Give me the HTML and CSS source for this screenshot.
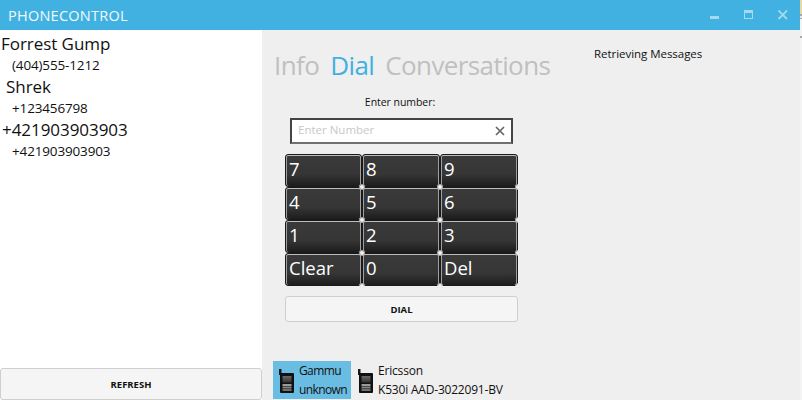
FILE: index.html
```html
<!DOCTYPE html>
<html lang="en">
<head>
<meta charset="utf-8">
<title>PhoneControl</title>
<link rel="stylesheet" href="styles.css">
</head>
<body>
<div class="window">
  <header class="titlebar">
    <span class="app-title">PHONECONTROL</span>
    <div class="win-controls">
      <svg class="win-icon" viewBox="0 0 10 10"><rect x="0" y="6" width="9" height="3" fill="#a6d9f0"/></svg>
      <svg class="win-icon" viewBox="0 0 10 10"><rect x="0.5" y="0.5" width="8" height="8" fill="none" stroke="#a6d9f0"/><rect x="0" y="0" width="9" height="3" fill="#a6d9f0"/></svg>
      <svg class="win-icon" viewBox="0 0 10 10"><path d="M0.5 0.5L9 9M9 0.5L0.5 9" stroke="#a6d9f0" stroke-width="1.8" fill="none"/></svg>
    </div>
  </header>
  <div class="content">
    <aside class="contacts">
      <ul class="contact-list">
        <li class="contact"><div class="contact-name">Forrest Gump</div><div class="contact-phone">(404)555-1212</div></li>
        <li class="contact indent"><div class="contact-name">Shrek</div><div class="contact-phone">+123456798</div></li>
        <li class="contact"><div class="contact-name">+421903903903</div><div class="contact-phone">+421903903903</div></li>
      </ul>
      <button class="flat-btn refresh">REFRESH</button>
    </aside>
    <main class="main">
      <div class="upper">
        <section class="dial-panel">
          <nav class="tabs">
            <span class="tab">Info</span>
            <span class="tab active">Dial</span>
            <span class="tab">Conversations</span>
          </nav>
          <div class="enter-label">Enter number:</div>
          <div class="number-box">
            <span class="placeholder">Enter Number</span>
            <svg class="clear-x" viewBox="0 0 10 10"><path d="M1 1L9 9M9 1L1 9" stroke="#666" stroke-width="1.7" fill="none"/></svg>
          </div>
          <div class="keypad">
            <button class="key">7</button><button class="key">8</button><button class="key">9</button>
            <button class="key">4</button><button class="key">5</button><button class="key">6</button>
            <button class="key">1</button><button class="key">2</button><button class="key">3</button>
            <button class="key">Clear</button><button class="key">0</button><button class="key">Del</button>
          </div>
          <button class="flat-btn dial">DIAL</button>
        </section>
        <section class="messages">Retrieving Messages</section>
      </div>
      <div class="devices">
        <div class="device selected">
          <svg class="phone" viewBox="0 0 16 25"><use href="#phone-shape"/></svg>
          <div class="device-text"><div>Gammu</div><div>unknown</div></div>
        </div>
        <div class="device">
          <svg class="phone" viewBox="0 0 16 25"><use href="#phone-shape"/></svg>
          <div class="device-text"><div>Ericsson</div><div>K530i AAD-3022091-BV</div></div>
        </div>
      </div>
    </main>
  </div>
</div>
<div class="edge"></div>
<svg class="defs" width="0" height="0">
  <defs>
    <linearGradient id="phone-screen" x1="0" y1="0" x2="0" y2="1">
      <stop offset="0" stop-color="#6a6a6a"/>
      <stop offset="1" stop-color="#333"/>
    </linearGradient>
    <g id="phone-shape">
      <rect x="0" y="0" width="2.5" height="6" fill="#1a1a1a"/>
      <rect x="1" y="4" width="14" height="20" rx="1" fill="#111"/>
      <rect x="3.5" y="7" width="9" height="6.5" fill="url(#phone-screen)"/>
      <rect x="3.5" y="15" width="9" height="2" fill="#9a9a9a"/>
      <rect x="3.5" y="17.5" width="9" height="2" fill="#858585"/>
      <rect x="3.5" y="20" width="9" height="2" fill="#6f6f6f"/>
    </g>
  </defs>
</svg>
</body>
</html>
```
FILE: styles.css
```css
* { box-sizing: border-box; }
html, body { margin: 0; padding: 0; }
body {
  width: 802px;
  height: 400px;
  overflow: hidden;
  background: #efefef;
  font-family: "Open Sans", "Noto Sans", sans-serif;
  color: #111;
  display: flex;
}
.window { width: 800px; height: 400px; flex: none; display: flex; flex-direction: column; }
.edge {
  width: 2px;
  height: 400px;
  flex: none;
  background: linear-gradient(#e6d9a6 0 14px, #a9a9a9 14px 16px, #e8e8e8 16px 18px, #a9a9a9 18px 19px, #f4f4f4 19px 36px, #a9a9a9 36px 38px, #f4f4f4 38px);
}
.titlebar {
  height: 30px;
  flex: none;
  background: #41b1e1;
  display: flex;
  align-items: center;
  justify-content: space-between;
  padding-left: 8px;
}
.app-title { color: #f2fafd; font-size: 14.5px; letter-spacing: 0.25px; font-weight: 400; }
.win-controls { display: flex; gap: 24px; padding-right: 12px; }
.win-icon { width: 10px; height: 10px; display: block; }
.content { flex: 1; display: flex; min-height: 0; }
.contacts {
  width: 262px;
  flex: none;
  background: #fff;
  display: flex;
  flex-direction: column;
  justify-content: space-between;
}
.contact-list { list-style: none; margin: 0; padding: 3px 0 0 2px; }
.contact-name { font-size: 17px; line-height: 22px; letter-spacing: -0.05px; }
.contact-phone { font-size: 13.5px; line-height: 21px; padding-left: 10px; letter-spacing: -0.15px; }
.contact.indent .contact-name { padding-left: 4px; }
.contact:first-child .contact-name { margin-left: -1px; }
.flat-btn {
  background: #f5f5f5;
  border: 1px solid #cfcfcf;
  border-radius: 3px;
  font-family: inherit;
  font-size: 9.5px;
  font-weight: 700;
  color: #111;
  padding: 0;
}
.refresh { height: 32px; width: 262px; }
.main { flex: 1; display: flex; flex-direction: column; justify-content: space-between; min-width: 0; }
.upper { display: flex; }
.dial-panel { width: 320px; padding: 16px 0 0 12px; display: flex; flex-direction: column; }
.tabs { display: flex; gap: 11px; height: 38px; align-items: center; white-space: nowrap; }
.tab { font-size: 26px; color: #c0c0c0; letter-spacing: -0.6px; }
.tab.active { color: #41b1e1; }
.enter-label { font-size: 10.5px; width: 252px; text-align: center; margin-top: 11px; line-height: 14px; letter-spacing: -0.05px; }
.number-box {
  width: 223px;
  height: 26px;
  margin: 9px 0 0 16px;
  background: #fff;
  border: 2px solid;
  border-color: #444 #444 #707070 #444;
  display: flex;
  align-items: center;
  justify-content: space-between;
  padding: 0 6px 0 6px;
}
.placeholder { font-size: 11.5px; color: #c8c8c8; margin-top: -3px; }
.clear-x { width: 10px; height: 10px; }
.keypad {
  width: 233px;
  margin: 10px 0 0 11px;
  display: grid;
  grid-template-columns: 77px 78px 78px;
  grid-auto-rows: 33px;
}
.key {
  position: relative;
  border: 1px solid #1a1a1a;
  border-radius: 3px;
  box-shadow: inset 0 1px 0 #bdbdbd, inset 1px 0 0 #a0a0a0, inset -1px 0 0 #a0a0a0;
  background: linear-gradient(#3a3a3a 0, #363636 62%, #1d1d1d 100%);
  color: #fff;
  font-family: inherit;
  font-size: 18.5px;
  line-height: 26px;
  text-align: left;
  padding: 0 0 3px 3px;
}
.key::after {
  content: "";
  position: absolute;
  right: -4px;
  bottom: -4px;
  width: 6px;
  height: 6px;
  border-radius: 50%;
  background: radial-gradient(circle, #fff 0, #e8e8e8 30%, rgba(200, 200, 200, 0) 100%);
  z-index: 1;
}
.dial { width: 233px; height: 26px; margin: 10px 0 0 11px; }
.messages { font-size: 11.5px; padding-top: 16px; margin-left: 12px; letter-spacing: -0.04px; }
.devices { display: flex; padding: 0 0 1px 11px; }
.device { display: flex; height: 38px; align-items: center; padding: 0 3px 0 6px; gap: 4px; }
.device.selected { background: #6abde2; padding-right: 4px; }
.device + .device { margin-left: 1px; }
.device.selected .device-text { letter-spacing: -0.6px; }
.phone { width: 16px; height: 25px; flex: none; margin-top: 3px; }
.device-text { font-size: 12px; line-height: 19px; letter-spacing: -0.2px; margin-top: -1px; }
.defs { position: absolute; }
```
